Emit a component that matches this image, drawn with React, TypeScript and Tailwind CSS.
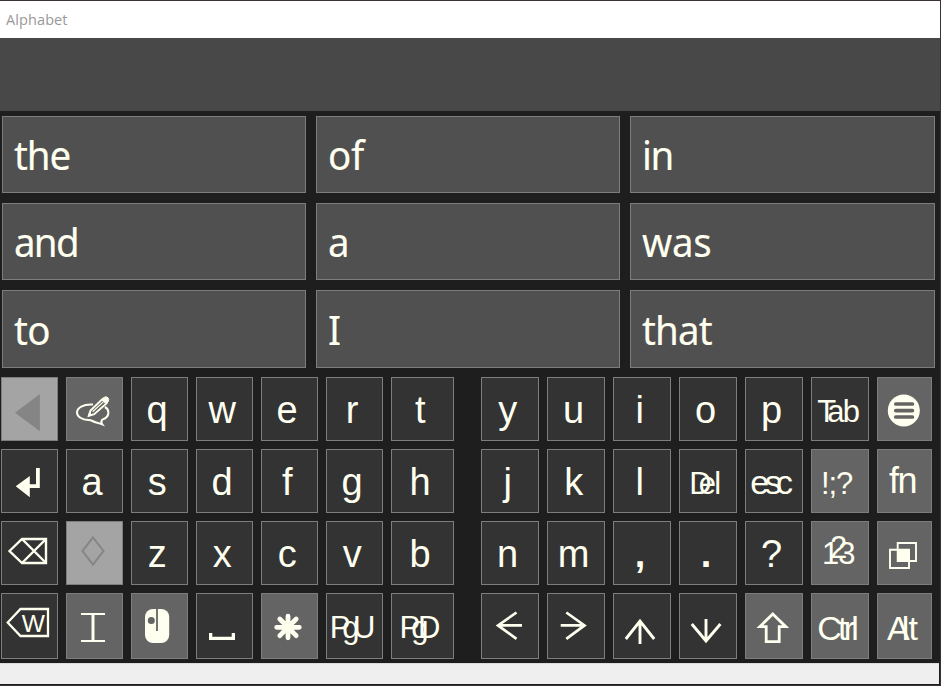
import type { ReactNode } from "react";

const INK = "#fffff0";
const MUTED = "#858585";
const PANEL = "#646464";

type Tone = "dark" | "mid" | "off";

const toneClass: Record<Tone, string> = {
  dark: "bg-[#333333]",
  mid: "bg-[#646464]",
  off: "bg-[#a4a4a4]",
};

interface KeyDef {
  label?: ReactNode;
  icon?: ReactNode;
  tone?: Tone;
  text?: string;
}

const letter = (c: string): KeyDef => ({
  label: c,
  text: "text-[38px] -translate-x-[2.3px] translate-y-[0.6px]",
});

const punctuation = (c: string): KeyDef => ({
  label: c,
  text: "text-[38px] font-bold -translate-x-[2px] translate-y-[0.6px]",
});

function Key({ def, w, h }: { def: KeyDef; w: number; h: number }) {
  return (
    <button
      className={`flex min-w-0 items-center justify-center overflow-hidden border border-[#7d7d7d] ${toneClass[def.tone ?? "dark"]}`}
    >
      {def.icon ? (
        <svg
          className="block shrink-0"
          width={w - 2}
          height={h - 2}
          viewBox={`1 1 ${w - 2} ${h - 2}`}
          fill="none"
          stroke={INK}
          strokeWidth="2.2"
        >
          {def.icon}
        </svg>
      ) : (
        <span className={`block whitespace-nowrap leading-none ${def.text}`}>{def.label}</span>
      )}
    </button>
  );
}

const icons = {
  back: <path d="M14 35.7 38.9 17V54.3Z" fill={MUTED} stroke="none" />,
  compose: (
    <>
      <path
        d="M27 27.6C17 27 11 30.8 11 35.5C11 39.5 16 43.1 22.5 43C25.5 43 27 44.6 29.5 45.3C31.8 46 34 46.6 36.2 47.4C35 45.8 35 44.2 36.3 42.6C40 41.4 42.6 38.6 42.4 35.2C42.2 32.8 40.8 30.8 38.8 30"
        strokeWidth="2"
      />
      <path d="M22.8 38.8 24.5 33.6 36.2 22.4 40.4 26.4 28.2 37.2Z" fill={PANEL} strokeWidth="1.9" />
      <path d="M26.6 34.8 37.6 24.6" strokeWidth="1.2" />
      <path d="M35.8 22 38.4 20.2Q40.4 19.2 42 20.8Q43.4 22.6 42.2 24.6L40.4 26.6Z" fill={INK} strokeWidth="1" />
      <path d="M22.3 39.2 23.4 35.6 26 38Z" fill={INK} strokeWidth="0.8" />
    </>
  ),
  enter: <path d="M35 19H38.8V39H28.8V48.2L14.7 37.3 28.8 27V35.2H35Z" fill={INK} stroke="none" />,
  menu: (
    <>
      <circle cx="26.8" cy="33.5" r="16" fill={INK} stroke="none" />
      <path d="M18.8 27H35.4M18.8 33.6H35.4M18.8 40H35.4" stroke={PANEL} strokeWidth="3.7" strokeLinecap="round" />
    </>
  ),
  backspace: (
    <>
      <path d="M8.5 30 21 18H45V42H21Z" strokeWidth="2.4" />
      <path d="M21 18 45 42M21 42 45 18" strokeWidth="2.4" />
    </>
  ),
  diamond: <path d="M27 16.5 37.5 30 27 43.5 16.5 30Z" stroke={MUTED} strokeWidth="2" />,
  windows: (
    <>
      <path d="M20.7 22H39V40H20.7ZM13 28.7H32V47H13Z" strokeWidth="1.9" />
      <path d="M20 28H33V41H20Z" fill={INK} stroke="none" />
    </>
  ),
  deleteWord: (
    <>
      <path d="M6.7 29.5 19.5 16H47V43H19.5Z" strokeWidth="2.3" />
      <text
        x="32.4"
        y="38.8"
        fontSize="24.5"
        fill={INK}
        stroke="none"
        textAnchor="middle"
        fontFamily="'Liberation Sans', Arial, sans-serif"
      >
        W
      </text>
    </>
  ),
  ibeam: (
    <>
      <path d="M15 21H39M15 48H39" strokeWidth="2" />
      <path d="M25.5 21H28.5V48H25.5Z" fill={INK} stroke="none" />
    </>
  ),
  mouse: (
    <>
      <rect x="14" y="16" width="24.2" height="34" rx="8" fill={INK} stroke="none" />
      <circle cx="20.3" cy="27.5" r="3.5" fill={PANEL} stroke="none" />
      <path d="M26 16V38" stroke={PANEL} strokeWidth="1.8" />
    </>
  ),
  space: <path d="M13 40H16.3V43.7H35.7V40H39V47H13Z" fill={INK} stroke="none" />,
  star: (
    <path
      d="M27 23.2V44.8M15.7 34.3H38.3M18.8 26 35.2 42.6M35.2 26 18.8 42.6"
      strokeWidth="4.8"
      strokeLinecap="round"
    />
  ),
  left: <path d="M41 32.4H17M35.5 19.5 17 32.4 35.5 45.8" strokeWidth="2.7" />,
  right: <path d="M13.7 32.4H37.5M19.3 19.5 37.5 32.4 19.3 45.8" strokeWidth="2.7" />,
  up: <path d="M27 51V28M12.8 46 27 28 41.2 46" strokeWidth="2.9" />,
  down: <path d="M27 26V48M12.8 31 27 48 41.4 31" strokeWidth="2.9" />,
  shift: <path d="M27.8 21 40.8 33.7H34.2V48.7H21.2V33.7H14.8Z" strokeWidth="2.8" />,
};

const tab = (
  <>
    <span className="tracking-[-9px]">T</span>
    <span className="tracking-[-1.8px]">a</span>b
  </>
);
const pageUp = (
  <>
    <span className="tracking-[-8.2px]">P</span>
    <span className="tracking-[-6.3px]">g</span>U
  </>
);
const pageDown = (
  <>
    <span className="tracking-[-9px]">P</span>
    <span className="tracking-[-10.5px]">g</span>D
  </>
);
const del = (
  <>
    <span className="tracking-[-12.8px]">D</span>
    <span className="tracking-[-1.9px]">e</span>l
  </>
);
const esc = (
  <>
    <span className="tracking-[-4.6px]">e</span>
    <span className="tracking-[-5.6px]">s</span>c
  </>
);
const alt = (
  <>
    <span className="tracking-[-8px]">A</span>
    <span className="tracking-[-0.8px]">l</span>t
  </>
);
const numbers = (
  <span className="flex">
    <span className="tracking-[-9.2px]">1</span>
    <span className="-translate-y-[5.5px] tracking-[-9px]">2</span>
    <span>3</span>
  </span>
);

const leftRows: KeyDef[][] = [
  [{ icon: icons.back, tone: "off" }, { icon: icons.compose, tone: "mid" }, ..."qwert".split("").map(letter)],
  [{ icon: icons.enter }, ..."asdfgh".split("").map(letter)],
  [{ icon: icons.backspace }, { icon: icons.diamond, tone: "off" }, ..."zxcvb".split("").map(letter)],
  [
    { icon: icons.deleteWord },
    { icon: icons.ibeam, tone: "mid" },
    { icon: icons.mouse, tone: "mid" },
    { icon: icons.space },
    { icon: icons.star, tone: "mid" },
    { label: pageUp, text: "text-[31px] -translate-x-[1.9px] translate-y-[1px]" },
    { label: pageDown, text: "text-[31px] -translate-x-[2.6px] translate-y-[1px]" },
  ],
];

const rightRows: KeyDef[][] = [
  [
    ..."yuiop".split("").map(letter),
    { label: tab, text: "text-[31px] -translate-x-[1.4px] translate-y-[2px]" },
    { icon: icons.menu, tone: "mid" },
  ],
  [
    ..."jkl".split("").map(letter),
    { label: del, text: "text-[31px] -translate-x-[2.8px] translate-y-[2px]" },
    { label: esc, text: "text-[34px] -translate-x-[2.3px] translate-y-[1px]" },
    { label: "!;?", tone: "mid", text: "text-[31px] tracking-[-1.2px] -translate-x-[3.5px] translate-y-[2px]" },
    { label: "fn", tone: "mid", text: "text-[36px] tracking-[-1.5px] -translate-x-[2px]" },
  ],
  [
    ..."nm".split("").map(letter),
    punctuation(","),
    punctuation("."),
    letter("?"),
    { label: numbers, tone: "mid", text: "text-[31px] -translate-x-[1.3px] -translate-y-[0.5px]" },
    { icon: icons.windows, tone: "mid" },
  ],
  [
    { icon: icons.left },
    { icon: icons.right },
    { icon: icons.up },
    { icon: icons.down },
    { icon: icons.shift, tone: "mid" },
    { label: "Ctrl", tone: "mid", text: "text-[34px] tracking-[-3.8px] -translate-x-[3.9px] translate-y-[2px]" },
    { label: alt, tone: "mid", text: "text-[34px] -translate-x-[2.1px] translate-y-[2px]" },
  ],
];

const predictions = ["the", "of", "in", "and", "a", "was", "to", "I", "that"];
const wordTracking: Record<string, string> = {
  the: "tracking-[-1.2px]",
  of: "tracking-[-0.3px]",
  in: "tracking-[-1.4px]",
  and: "tracking-[-1.8px]",
  a: "",
  was: "tracking-[-0.3px]",
  to: "tracking-[-0.8px]",
  I: "",
  that: "tracking-[-0.9px]",
};
const rowHeights = [64, 64, 64, 66];

export default function App() {
  return (
    <div className="flex h-[686px] w-[941px] flex-col overflow-hidden bg-[#3b3234] pt-px text-[#fffff0] [font-family:'Liberation_Sans',Arial,sans-serif]">
      <header className="flex h-[37px] w-[940px] shrink-0 items-center bg-white pl-[6px] text-[14.5px] text-[#999999] [font-family:'Open_Sans','Noto_Sans',sans-serif]">
        <span className="tracking-[0.1px]">Alphabet</span>
      </header>
      <div className="h-[73px] w-[940px] shrink-0 bg-[#484848]" />
      <main className="flex h-[552px] w-[940px] shrink-0 flex-col bg-[#1e1e1e] pt-[5px]">
        <section className="grid grid-cols-[304px_304px_305px] grid-rows-[77px_77px_78px] gap-[10px] pl-[2px]">
          {predictions.map((word) => (
            <button
              key={word}
              className="flex items-center border border-[#7d7d7d] bg-[#505050] pt-[2px] pl-[11px] text-[40.5px] leading-none [font-family:'Noto_Sans',sans-serif] [-webkit-text-stroke:0.15px_#fffff0]"
            >
              <span className={`block origin-left scale-x-[0.95] ${wordTracking[word]}`}>{word}</span>
            </button>
          ))}
        </section>
        <section className="mt-[9px] flex gap-[27px] pl-px">
          <div className="grid grid-cols-[57px_57px_57px_57px_57px_57px_63px] grid-rows-[64px_64px_64px_66px] gap-2">
            {leftRows.flatMap((row, r) =>
              row.map((def, c) => <Key key={`${r}-${c}`} def={def} w={c === 6 ? 63 : 57} h={rowHeights[r]} />),
            )}
          </div>
          <div className="grid grid-cols-[58px_58px_58px_58px_58px_58px_55px] grid-rows-[64px_64px_64px_66px] gap-2">
            {rightRows.flatMap((row, r) =>
              row.map((def, c) => <Key key={`${r}-${c}`} def={def} w={c === 6 ? 55 : 58} h={rowHeights[r]} />),
            )}
          </div>
        </section>
      </main>
      <footer className="flex h-[22px] w-[940px] shrink-0 flex-col bg-[#1e1e1e] pb-px">
        <div className="w-[939px] grow border-t border-[#dcdcdc] bg-[#efefef]" />
      </footer>
    </div>
  );
}
